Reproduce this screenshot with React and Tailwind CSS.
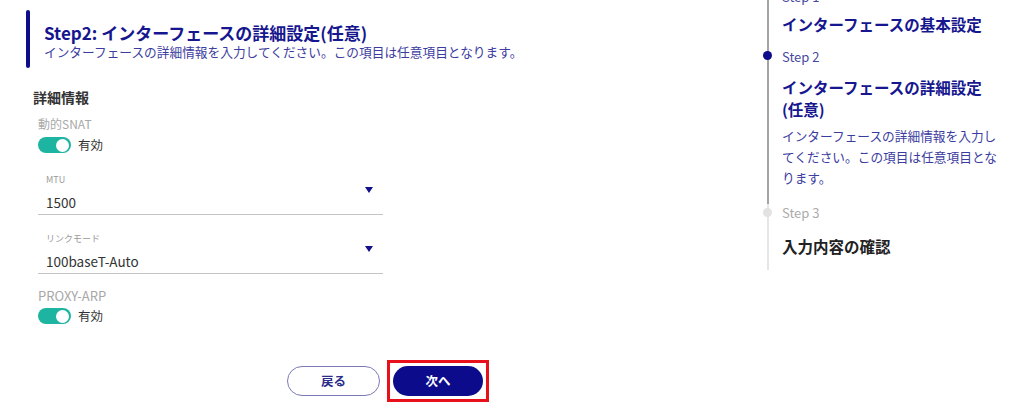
import { useState } from "react";

function Toggle({ on, onChange }) {
  return (
    <button
      onClick={onChange}
      className={`relative h-[16px] w-[33px] rounded-full ${on ? "bg-[#1eb4a2]" : "bg-[#c8c8c8]"}`}
    >
      <span
        className={`absolute top-[1.5px] h-[13px] w-[13px] rounded-full bg-white ${on ? "right-[2px]" : "left-[2px]"}`}
      />
    </button>
  );
}

function SelectField({ label, value }) {
  return (
    <div className="flex items-center border-b border-[#c4c4c4] pb-[2px] pr-[10px] pt-[2px]">
      <div className="flex-1 pl-[8px]">
        <div className="text-[9px] leading-[12px] text-[#9a9a9a]">{label}</div>
        <div className="mt-[6px] text-[13.5px] leading-[20px] text-[#333]">{value}</div>
      </div>
      <svg width="8" height="6" viewBox="0 0 8 6" className="mt-[-6px]">
        <polygon points="0,0 8,0 4,6" fill="#10108c" />
      </svg>
    </div>
  );
}

export default function App() {
  // switches
  const [snat, setSnat] = useState(true);
  const [proxyArp, setProxyArp] = useState(true);

  return (
    <div
      className="flex h-[416px] w-[1024px] overflow-hidden bg-white"
      style={{ fontFamily: '"Noto Sans CJK JP", "Noto Sans", sans-serif' }}
    >
      {/* Main form */}
      <div className="w-[746px] shrink-0 pl-[26px]">
        {/* Header */}
        <div className="mt-[10px] flex gap-[14px]">
          <div className="h-[58px] w-[4px] shrink-0 rounded-full bg-[#0d0d8c]" />
          <div className="pt-[13px]">
            <h1 className="text-[17px] font-bold leading-[20px] text-[#16168f]">
              Step2: インターフェースの詳細設定(任意)
            </h1>
            <p className="text-[12.7px] leading-[18px] text-[#3c3ca0]">
              インターフェースの詳細情報を入力してください。この項目は任意項目となります。
            </p>
          </div>
        </div>

        <h2 className="ml-[7px] mt-[19px] text-[14px] font-bold leading-[20px] text-[#333]">詳細情報</h2>

        <div className="ml-[12px] w-[345px]">
          <div className="mt-[9px] text-[12px] leading-[16px] text-[#a8a8a8]">動的SNAT</div>
          <div className="mt-[5px] flex items-center gap-[7px]">
            <Toggle on={snat} onChange={() => setSnat(!snat)} />
            <span className="text-[12.5px] leading-[16px] text-[#333]">有効</span>
          </div>

          <div className="mt-[19px]">
            <SelectField label="MTU" value="1500" />
          </div>
          <div className="mt-[16px]">
            <SelectField label="リンクモード" value="100baseT-Auto" />
          </div>

          <div className="mt-[13px] text-[13px] leading-[18px] text-[#a8a8a8]">PROXY-ARP</div>
          <div className="mt-[3px] flex items-center gap-[7px]">
            <Toggle on={proxyArp} onChange={() => setProxyArp(!proxyArp)} />
            <span className="text-[12.5px] leading-[16px] text-[#333]">有効</span>
          </div>
        </div>

        {/* Actions */}
        <div className="mt-[36px] flex items-center justify-center gap-[7px] pl-[4px]">
          <button className="h-[30px] w-[93px] rounded-full border-[1.5px] border-[#7a7ab8] text-[12.5px] font-bold text-[#2c2c8a]">
            戻る
          </button>
          <div className="border-[3px] border-[#e8101a] p-[3px]">
            <button className="block h-[30px] w-[90px] rounded-full bg-[#0b0b8c] text-[12.5px] font-bold text-white">
              次へ
            </button>
          </div>
        </div>
      </div>

      {/* Stepper */}
      <div className="ml-[21px] mt-[-12px] w-[240px]">
        <div className="relative border-l-2 border-[#a4a4a4] pl-[13px]">
          <div className="text-[13px] leading-[18px] text-[#4848a0]">Step 1</div>
          <div className="mt-[7px] text-[15.5px] font-bold leading-[22px] text-[#16168f]">
            インターフェースの基本設定
          </div>
          <div className="h-[13px]" />
        </div>
        <div className="relative border-l-2 border-[#a4a4a4] pl-[13px]">
          <span className="absolute left-[-6px] top-[3px] h-[9px] w-[9px] rounded-full bg-[#0d0d8c]" />
          <div className="text-[13px] leading-[18px] text-[#4848a0]">Step 2</div>
          <div className="mt-[10px] w-[222px] text-[15.5px] font-bold leading-[22px] text-[#16168f]">
            インターフェースの詳細設定<span className="whitespace-nowrap">(任意)</span>
          </div>
          <p className="mt-[5px] w-[222px] text-[12.7px] leading-[21px] text-[#3c3ca0]">
            インターフェースの詳細情報を入力してください。この項目は任意項目となります。
          </p>
          <div className="h-[16px]" />
        </div>
        <div className="relative border-l-2 border-[#e6e6e6] pb-[13px] pl-[13px]">
          <span className="absolute left-[-6px] top-[4px] h-[9px] w-[9px] rounded-full bg-[#e2e2e2]" />
          <div className="text-[13px] leading-[18px] text-[#ababab]">Step 3</div>
          <div className="mt-[13px] text-[15.5px] font-bold leading-[22px] text-[#222]">入力内容の確認</div>
        </div>
      </div>
    </div>
  );
}
